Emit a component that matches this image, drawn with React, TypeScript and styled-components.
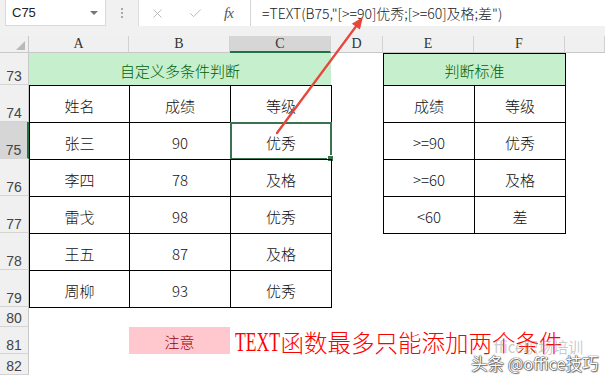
import React from 'react';
import styled, { createGlobalStyle, css } from 'styled-components';
import { X, Check } from 'lucide-react';

const GlobalStyle = createGlobalStyle`
  html, body { margin: 0; padding: 0; background: #fff; }
  body { overflow: hidden; }
`;

const CJK = `"Noto Sans CJK SC", "Noto Sans", sans-serif`;

const Page = styled.div`
  position: relative;
  width: 605px;
  height: 375px;
  overflow: hidden;
  background: #fff;
  font-family: ${CJK};
`;

/* ---------- formula bar ---------- */
const FormulaBar = styled.div`
  display: flex;
  align-items: flex-start;
  height: 36px;
  box-sizing: border-box;
  padding-left: 5px;
  background: #f1f1f1;
`;

const NameBox = styled.div`
  width: 101px;
  height: 26px;
  box-sizing: border-box;
  display: flex;
  align-items: center;
  justify-content: space-between;
  padding: 0 7px 0 6px;
  background: #fff;
  border: 1px solid #d9d9d9;
  border-top: none;
  font: 13px "Liberation Sans", sans-serif;
  color: #222;
`;

const Caret = styled.span`
  width: 0;
  height: 0;
  border-left: 4px solid transparent;
  border-right: 4px solid transparent;
  border-top: 4px solid #777;
`;

const Grip = styled.div`
  width: 32px;
  height: 26px;
  display: flex;
  flex-direction: column;
  align-items: center;
  justify-content: center;
  gap: 2px;
`;

const GripDot = styled.span`
  width: 2px;
  height: 2px;
  background: #a8a8a8;
`;

const FxBox = styled.div`
  width: 112px;
  height: 26px;
  box-sizing: border-box;
  display: flex;
  align-items: center;
  padding-left: 11px;
  gap: 23px;
  background: #fff;
  border-left: 1px solid #dcdcdc;
  color: #b4b4b4;
`;

const FxLabel = styled.span`
  font: italic 15px "Liberation Serif", serif;
  color: #555;
  margin-left: -2px;
  letter-spacing: -1px;
`;

const FormulaField = styled.div`
  flex: 1;
  height: 26px;
  box-sizing: border-box;
  display: flex;
  align-items: center;
  padding-left: 11px;
  background: #fff;
  border-left: 1px solid #d4d4d4;
  font: 300 14px ${CJK};
  color: #222;
  white-space: nowrap;
`;

/* ---------- sheet ---------- */
const Sheet = styled.div`
  display: grid;
  grid-template-columns: 29px 100px 101px 101px 52px 91px 91px 40px;
  grid-template-rows: 17px 32px repeat(6, 37px) 20px 27px 21px;
`;

const Corner = styled.div`
  display: flex;
  align-items: flex-end;
  justify-content: flex-end;
  padding: 0 3px 2px 0;
  box-sizing: border-box;
  background: #f0f0f0;
  border-right: 1px solid #c8c8c8;
  border-bottom: 1px solid #c8c8c8;
  &::after {
    content: '';
    width: 0;
    height: 0;
    border-left: 9px solid transparent;
    border-bottom: 9px solid #b9b9b9;
  }
`;

const ColHeader = styled.div<{ $active?: boolean }>`
  display: flex;
  align-items: center;
  justify-content: center;
  box-sizing: border-box;
  background: ${(p) => (p.$active ? '#d6d6d6' : '#f0f0f0')};
  border-right: 1px solid #d2d2d2;
  border-bottom: ${(p) => (p.$active ? '2px solid #217346' : '1px solid #c8c8c8')};
  font: 14px "Liberation Serif", serif;
  color: #333;
  line-height: 1;
`;

const RowHeader = styled.div<{ $active?: boolean }>`
  display: flex;
  align-items: flex-end;
  justify-content: center;
  box-sizing: border-box;
  padding-bottom: 1px;
  background: ${(p) => (p.$active ? '#d6d6d6' : '#f0f0f0')};
  border-bottom: 1px solid #d4d4d4;
  border-right: ${(p) => (p.$active ? '2px solid #217346' : '1px solid #c8c8c8')};
  font: 14px "Liberation Sans", sans-serif;
  color: #444;
  line-height: 1;
`;

type Tone = 'plain' | 'title' | 'note' | 'remark';

const toneStyles: Record<Tone, ReturnType<typeof css>> = {
  plain: css`
    color: #111;
  `,
  title: css`
    background: #c6efce;
    color: #006100;
  `,
  note: css`
    background: #ffc7ce;
    color: #9c0006;
  `,
  remark: css`
    justify-content: flex-start;
    padding-left: 5px;
    color: #ff0000;
    font-size: 23.5px;
    overflow: visible;
    z-index: 2;
  `,
};

const Cell = styled.div<{ $span?: number; $tone?: Tone; $boxed?: boolean }>`
  grid-column: span ${(p) => p.$span ?? 1};
  position: relative;
  display: flex;
  align-items: center;
  justify-content: center;
  box-sizing: border-box;
  padding-top: 2px;
  font-size: 15px;
  font-weight: 300;
  white-space: nowrap;
  ${(p) => toneStyles[p.$tone ?? 'plain']}
  ${(p) =>
    p.$boxed &&
    css`
      border: 1px solid #000;
      margin: 0 -1px -1px 0;
    `}
`;

const LatinSerif = styled.span`
  display: inline-block;
  font-family: "Liberation Serif", serif;
  font-size: 28px;
  font-weight: 400;
  transform: scaleX(0.63);
  transform-origin: left center;
  margin-right: -26px;
`;

const Selection = styled.div`
  position: absolute;
  inset: -1px -1px -1px -1px;
  border: 2px solid #3b7250;
  pointer-events: none;
`;

const FillHandle = styled.div`
  position: absolute;
  right: -4px;
  bottom: -4px;
  width: 5px;
  height: 5px;
  background: #3b7250;
  border: 1px solid #fff;
`;

const ArrowLayer = styled.svg`
  position: absolute;
  left: 0;
  top: 0;
  pointer-events: none;
  z-index: 5;
`;

const GhostText = styled.div`
  position: absolute;
  left: 494px;
  top: 336px;
  font: 15px ${CJK};
  color: rgba(150, 150, 150, 0.5);
  white-space: nowrap;
  z-index: 6;
`;

const Watermark = styled.div`
  position: absolute;
  left: 471px;
  top: 351px;
  font: 16.5px ${CJK};
  color: #fff;
  white-space: nowrap;
  text-shadow: 0 0 1px #222, 0 0 1px #222, 1px 1px 1px rgba(0, 0, 0, 0.5);
  z-index: 7;
`;

/* ---------- data ---------- */
type Spec = {
  text?: React.ReactNode;
  span?: number;
  tone?: Tone;
  boxed?: boolean;
  selected?: boolean;
};

const blank: Spec = {};
const t = (text: string, extra: Partial<Spec> = {}): Spec => ({ text, boxed: true, ...extra });

const rows: { num: number; cells: Spec[] }[] = [
  {
    num: 73,
    cells: [
      { text: '自定义多条件判断', span: 3, tone: 'title' },
      blank,
      { text: '判断标准', span: 2, tone: 'title', boxed: true },
      blank,
    ],
  },
  { num: 74, cells: [t('姓名'), t('成绩'), t('等级'), blank, t('成绩'), t('等级'), blank] },
  { num: 75, cells: [t('张三'), t('90'), t('优秀', { selected: true }), blank, t('>=90'), t('优秀'), blank] },
  { num: 76, cells: [t('李四'), t('78'), t('及格'), blank, t('>=60'), t('及格'), blank] },
  { num: 77, cells: [t('雷戈'), t('98'), t('优秀'), blank, t('<60'), t('差'), blank] },
  { num: 78, cells: [t('王五'), t('87'), t('及格'), blank, blank, blank, blank] },
  { num: 79, cells: [t('周柳'), t('93'), t('优秀'), blank, blank, blank, blank] },
  { num: 80, cells: [blank, blank, blank, blank, blank, blank, blank] },
  {
    num: 81,
    cells: [
      blank,
      { text: '注意', tone: 'note' },
      {
        text: (
          <>
            <LatinSerif>TEXT</LatinSerif>函数最多只能添加两个条件
          </>
        ),
        tone: 'remark',
      },
      blank,
      blank,
      blank,
      blank,
    ],
  },
  { num: 82, cells: [blank, blank, blank, blank, blank, blank, blank] },
];

const columns = ['A', 'B', 'C', 'D', 'E', 'F', ''];

// arrow geometry
const tail = { x: 277, y: 133 };
const tip = { x: 363, y: 17 };
const dx = tip.x - tail.x;
const dy = tip.y - tail.y;
const len = Math.hypot(dx, dy);
const ux = dx / len;
const uy = dy / len;
const headLen = 12;
const headHalf = 5;
const bx = tip.x - ux * headLen;
const by = tip.y - uy * headLen;
const headPoints = `${tip.x},${tip.y} ${bx - uy * headHalf},${by + ux * headHalf} ${bx + uy * headHalf},${by - ux * headHalf}`;

export default function App() {
  return (
    <Page>
      <GlobalStyle />
      <FormulaBar>
        <NameBox>
          <span>C75</span>
          <Caret />
        </NameBox>
        <Grip>
          <GripDot />
          <GripDot />
          <GripDot />
        </Grip>
        <FxBox>
          <X size={15} strokeWidth={1.4} />
          <Check size={15} strokeWidth={1.4} />
          <FxLabel>fx</FxLabel>
        </FxBox>
        <FormulaField>=TEXT(B75,"[&gt;=90]优秀;[&gt;=60]及格;差")</FormulaField>
      </FormulaBar>
      <Sheet>
        <Corner />
        {columns.map((c, i) => (
          <ColHeader key={i} $active={c === 'C'}>
            {c}
          </ColHeader>
        ))}
        {rows.map((row) => (
          <React.Fragment key={row.num}>
            <RowHeader $active={row.num === 75}>{row.num}</RowHeader>
            {row.cells.map((cell, i) => (
              <Cell key={i} $span={cell.span} $tone={cell.tone} $boxed={cell.boxed}>
                {cell.text}
                {cell.selected && (
                  <Selection>
                    <FillHandle />
                  </Selection>
                )}
              </Cell>
            ))}
          </React.Fragment>
        ))}
      </Sheet>
      <ArrowLayer width={605} height={375} viewBox="0 0 605 375">
        <line x1={tail.x} y1={tail.y} x2={bx} y2={by} stroke="#e8463a" strokeWidth={2.4} strokeLinecap="round" />
        <polygon points={headPoints} fill="#e8463a" />
      </ArrowLayer>
      <GhostText>ffice职场培训</GhostText>
      <Watermark>头条 @office技巧</Watermark>
    </Page>
  );
}
